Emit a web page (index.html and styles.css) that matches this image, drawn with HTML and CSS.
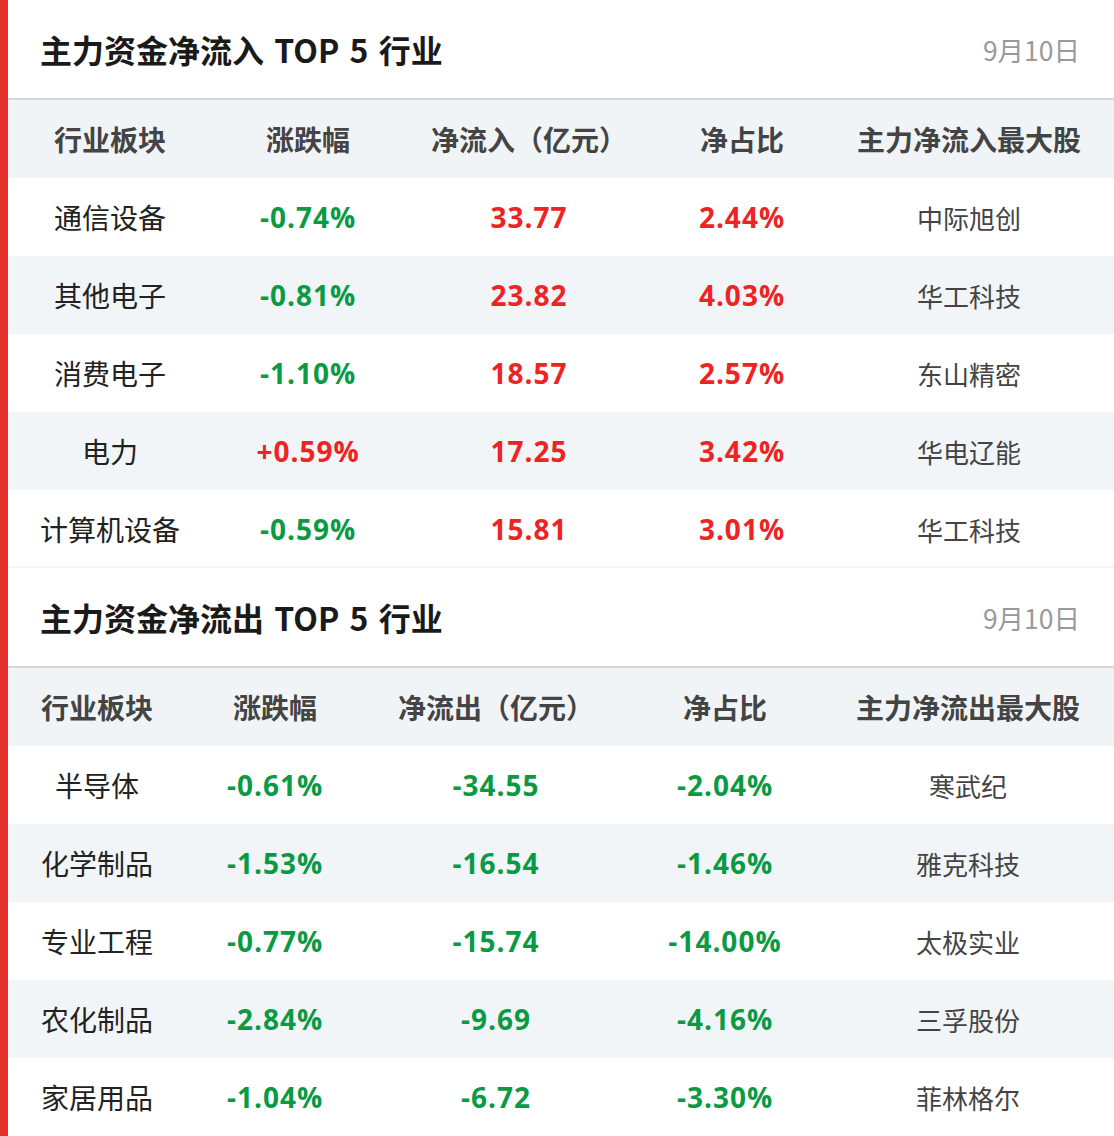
FILE: index.html
```html
<!DOCTYPE html>
<html lang="zh-CN">
<head>
<meta charset="utf-8">
<link rel="stylesheet" href="styles.css">
</head>
<body>
<div class="page">
  <section class="card card-first">
    <div class="card-head">
      <h2 class="title">主力资金净流入 TOP 5 行业</h2>
      <span class="date">9月10日</span>
    </div>
    <table class="tbl tbl-in">
      <colgroup><col class="c1"><col class="c2"><col class="c3"><col class="c4"><col class="c5"></colgroup>
      <thead>
        <tr><th>行业板块</th><th>涨跌幅</th><th>净流入（亿元）</th><th>净占比</th><th>主力净流入最大股</th></tr>
      </thead>
      <tbody>
        <tr><td class="name">通信设备</td><td class="num down">-0.74%</td><td class="num up">33.77</td><td class="num up">2.44%</td><td class="stock">中际旭创</td></tr>
        <tr><td class="name">其他电子</td><td class="num down">-0.81%</td><td class="num up">23.82</td><td class="num up">4.03%</td><td class="stock">华工科技</td></tr>
        <tr><td class="name">消费电子</td><td class="num down">-1.10%</td><td class="num up">18.57</td><td class="num up">2.57%</td><td class="stock">东山精密</td></tr>
        <tr><td class="name">电力</td><td class="num up">+0.59%</td><td class="num up">17.25</td><td class="num up">3.42%</td><td class="stock">华电辽能</td></tr>
        <tr><td class="name">计算机设备</td><td class="num down">-0.59%</td><td class="num up">15.81</td><td class="num up">3.01%</td><td class="stock">华工科技</td></tr>
      </tbody>
    </table>
  </section>
  <section class="card card-second">
    <div class="card-head">
      <h2 class="title">主力资金净流出 TOP 5 行业</h2>
      <span class="date">9月10日</span>
    </div>
    <table class="tbl tbl-out">
      <colgroup><col class="c1"><col class="c2"><col class="c3"><col class="c4"><col class="c5"></colgroup>
      <thead>
        <tr><th>行业板块</th><th>涨跌幅</th><th>净流出（亿元）</th><th>净占比</th><th>主力净流出最大股</th></tr>
      </thead>
      <tbody>
        <tr><td class="name">半导体</td><td class="num down">-0.61%</td><td class="num down">-34.55</td><td class="num down">-2.04%</td><td class="stock">寒武纪</td></tr>
        <tr><td class="name">化学制品</td><td class="num down">-1.53%</td><td class="num down">-16.54</td><td class="num down">-1.46%</td><td class="stock">雅克科技</td></tr>
        <tr><td class="name">专业工程</td><td class="num down">-0.77%</td><td class="num down">-15.74</td><td class="num down">-14.00%</td><td class="stock">太极实业</td></tr>
        <tr><td class="name">农化制品</td><td class="num down">-2.84%</td><td class="num down">-9.69</td><td class="num down">-4.16%</td><td class="stock">三孚股份</td></tr>
        <tr><td class="name">家居用品</td><td class="num down">-1.04%</td><td class="num down">-6.72</td><td class="num down">-3.30%</td><td class="stock">菲林格尔</td></tr>
      </tbody>
    </table>
  </section>
</div>
</body>
</html>
```
FILE: styles.css
```css
html, body {
  margin: 0;
  padding: 0;
  background: #ffffff;
}
body {
  font-family: "Open Sans", "Noto Sans CJK SC", sans-serif;
  color: #222;
}
.page {
  width: 1114px;
  height: 1136px;
  overflow: hidden;
  box-sizing: border-box;
  border-left: 8px solid #e3302a;
}
.card {
  background: #fff;
}
.card-first tbody tr:last-child td {
  box-shadow: inset 0 -2px 0 #f3f4f6;
}
.card-head {
  height: 100px;
  box-sizing: border-box;
  display: flex;
  align-items: center;
  justify-content: space-between;
  padding: 0 34px 0 32px;
  border-bottom: 2px solid #d3d7dc;
}
.title {
  margin: 0;
  font-family: "Noto Sans CJK SC", sans-serif;
  font-size: 32px;
  font-weight: 700;
  color: #1a1a1a;
  word-spacing: 3px;
}
.date {
  font-family: "Noto Sans CJK SC", sans-serif;
  font-size: 26.5px;
  color: #999;
}
.tbl {
  width: 1106px;
  border-collapse: collapse;
  table-layout: fixed;
}
.tbl th, .tbl td {
  height: 78px;
  padding: 0;
  text-align: center;
  vertical-align: middle;
  white-space: nowrap;
}
.tbl thead tr {
  background: #f1f4f7;
}
.tbl th {
  font-family: "Noto Sans CJK SC", sans-serif;
  font-size: 28px;
  font-weight: 700;
  color: #444;
}
.tbl tbody tr:nth-child(even) {
  background: #f2f5f8;
}
.tbl td.name {
  font-family: "Noto Sans CJK SC", sans-serif;
  font-size: 28px;
  color: #222;
}
.tbl td.stock {
  font-family: "Noto Sans CJK SC", sans-serif;
  font-size: 26px;
  color: #444;
}
.tbl td.num {
  font-family: "Open Sans", sans-serif;
  font-size: 28px;
  font-weight: 700;
  letter-spacing: 1px;
}
.up { color: #ee2323; }
.down { color: #0b9a44; }

.tbl-in .c1 { width: 204px; }
.tbl-in .c2 { width: 192px; }
.tbl-in .c3 { width: 250px; }
.tbl-in .c4 { width: 176px; }
.tbl-in .c5 { width: 284px; }
.tbl-in td:nth-child(5), .tbl-in th:nth-child(5) { padding-right: 6px; }

.tbl-out .c1 { width: 178px; }
.tbl-out .c2 { width: 178px; }
.tbl-out .c3 { width: 264px; }
.tbl-out .c4 { width: 194px; }
.tbl-out .c5 { width: 292px; }
```
